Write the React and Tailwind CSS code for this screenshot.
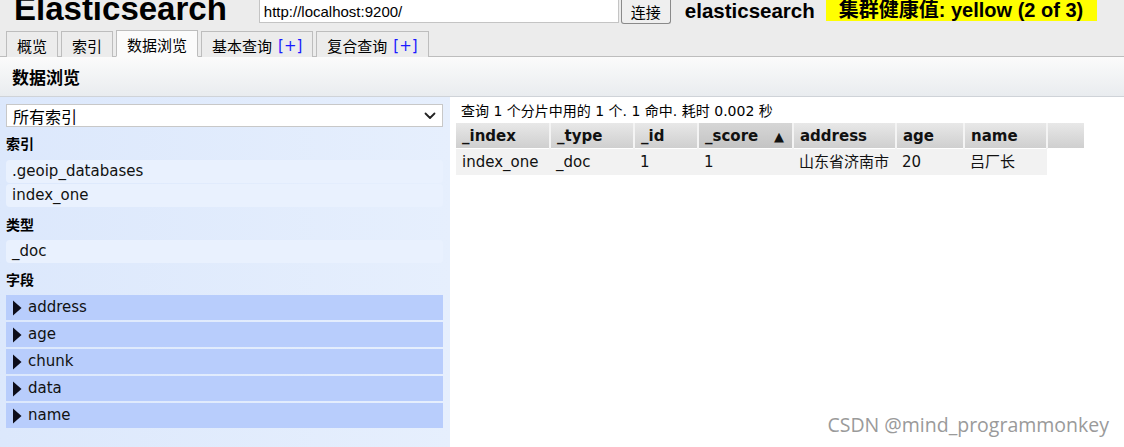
import React from "react";

const tabs = [
  { label: "概览" },
  { label: "索引" },
  { label: "数据浏览", active: true },
  { label: "基本查询", plus: true },
  { label: "复合查询", plus: true },
];

const indices = [".geoip_databases", "index_one"];
const fields = ["address", "age", "chunk", "data", "name"];

const columns = [
  { key: "_index", w: "w-[94px]" },
  { key: "_type", w: "w-[84px]" },
  { key: "_id", w: "w-[64px]" },
  { key: "_score", w: "w-[95px]", sorted: true },
  { key: "address", w: "w-[103px]" },
  { key: "age", w: "w-[68px]" },
  { key: "name", w: "w-[83px]" },
];

const row = ["index_one", "_doc", "1", "1", "山东省济南市", "20", "吕厂长"];

const SideLabel = ({ children, h }) => (
  <div className={`${h} flex items-center pt-[2px] text-[14px] font-bold text-black`}>
    {children}
  </div>
);

const SideItem = ({ children }) => (
  <div className="h-[23px] mb-px flex items-center pl-[6px] rounded-[4px] bg-[#e9f1fe] text-[15px] text-[#111]">
    {children}
  </div>
);

const App = () => {
  return (
    <div className="relative w-[1124px] h-[447px] overflow-hidden bg-white font-['DejaVu_Sans','Noto_Sans_CJK_SC',sans-serif]">
      {/* top bar */}
      <div className="bg-[#ececec] h-[57px] border-b border-[#bdbdbd] flex flex-col">
        <div className="h-[31px] flex items-start">
          <h1 className="ml-[14px] -mt-[10px] text-[33px] leading-[38px] font-bold text-black font-['Liberation_Sans',sans-serif]">
            Elasticsearch
          </h1>
          <input
            readOnly
            value="http://localhost:9200/"
            className="ml-[32px] w-[360px] h-[23px] bg-white border border-[#c4c4c4] border-t-0 px-[4px] text-[15px] text-black outline-none font-['Liberation_Sans',sans-serif]"
          />
          <button className="ml-[2px] w-[50px] h-[24px] border border-[#8a8a8a] rounded-b-[3px] border-t-0 bg-[#efefef] text-[15px] leading-none text-black font-['Noto_Sans_CJK_SC',sans-serif]">
            连接
          </button>
          <span className="ml-[14px] text-[20.5px] leading-[22px] font-bold text-black font-['Liberation_Sans',sans-serif]">
            elasticsearch
          </span>
          <span className="ml-[11px] w-[271px] h-[21px] bg-[#ffff00] pl-[13px] text-[20px] leading-[21px] font-bold text-black font-['Liberation_Sans','Noto_Sans_CJK_SC',sans-serif]">
            集群健康值: yellow (2 of 3)
          </span>
        </div>
        <div className="flex items-end gap-[3px] pl-[6px] h-[26px] -mb-px">
          {tabs.map((t) => (
            <div
              key={t.label}
              className={`h-[26px] px-[10px] pt-[4px] flex items-center border border-[#bdbdbd] text-[15px] text-black font-['Noto_Sans_CJK_SC',sans-serif] ${
                t.active
                  ? "bg-[#fbfbfb] border-b-[#fbfbfb] h-[27px]"
                  : "bg-[#ececec] border-b-0"
              }`}
            >
              {t.label}
              {t.plus && (
                <span className="ml-[6px] text-[#1a1aff] font-['DejaVu_Sans',sans-serif]">
                  [+]
                </span>
              )}
            </div>
          ))}
        </div>
      </div>

      {/* section header */}
      <div className="h-[40px] bg-gradient-to-b from-[#fbfbfb] to-[#e9ecef] border-b border-[#cfd3d8] flex items-center pl-[12px]">
        <span className="text-[17px] font-bold text-black font-['Noto_Sans_CJK_SC',sans-serif]">
          数据浏览
        </span>
      </div>

      <div className="flex h-[350px]">
        {/* sidebar */}
        <div className="w-[450px] bg-gradient-to-r from-[#dce8fc] to-[#e6effd] pl-[6px] pr-[7px] pt-[7px]">
          <div className="h-[23px] bg-white border border-[#c8c8c8] flex items-center justify-between pl-[6px] pr-[6px]">
            <span className="text-[16px] text-black font-['Noto_Sans_CJK_SC',sans-serif]">
              所有索引
            </span>
            <svg width="12" height="8" viewBox="0 0 12 8" fill="none">
              <path
                d="M1.5 1.5L6 6L10.5 1.5"
                stroke="#222"
                strokeWidth="1.8"
                strokeLinecap="round"
                strokeLinejoin="round"
              />
            </svg>
          </div>
          <SideLabel h="h-[33px]">索引</SideLabel>
          {indices.map((i) => (
            <SideItem key={i}>{i}</SideItem>
          ))}
          <SideLabel h="h-[32px]">类型</SideLabel>
          <SideItem>_doc</SideItem>
          <SideLabel h="h-[31px]">字段</SideLabel>
          {fields.map((f) => (
            <div
              key={f}
              className="h-[25px] mb-[2px] bg-[#b8cdfc] flex items-center pl-[6px] text-[15px] text-[#111]"
            >
              <svg width="10" height="16" viewBox="0 0 10 16" className="mr-[6px]">
                <path d="M1 0.5L9.5 8L1 15.5Z" fill="#0d0d1a" />
              </svg>
              {f}
            </div>
          ))}
        </div>

        {/* results */}
        <div className="flex-1 pl-[6px]">
          <div className="h-[26px] pt-[2px] flex items-center pl-[5px] text-[14px] text-black">
            查询 1 个分片中用的 1 个. 1 命中. 耗时 0.002 秒
          </div>
          <table className="border-collapse">
            <thead>
              <tr className="h-[25px]">
                {columns.map((c) => (
                  <th
                    key={c.key}
                    className={`${c.w} p-0 pl-[6px] pr-[8px] pt-[2px] text-left text-[15px] font-bold text-[#111] border-r-2 border-[#f4f4f4] bg-gradient-to-b ${
                      c.sorted
                        ? "from-[#d6d6d6] to-[#c4c4c4]"
                        : "from-[#e8e8e8] to-[#cfcfcf]"
                    }`}
                  >
                    <div className="flex items-center justify-between">
                      <span>{c.key}</span>
                      {c.sorted && <span className="text-[13px]">▲</span>}
                    </div>
                  </th>
                ))}
                <th className="w-[37px] p-0 bg-gradient-to-b from-[#e8e8e8] to-[#cfcfcf]" />
              </tr>
            </thead>
            <tbody>
              <tr className="h-[27px]">
                {row.map((v, i) => (
                  <td
                    key={i}
                    className="p-0 pl-[6px] bg-[#f2f2f2] text-[15px] text-[#111] border-t border-white"
                  >
                    {v}
                  </td>
                ))}
                <td className="p-0" />
              </tr>
            </tbody>
          </table>
        </div>
      </div>

      {/* watermark */}
      <div className="absolute right-[15px] bottom-[8px] text-[19.5px] text-[#9a9a9a] font-['Open_Sans',sans-serif] [text-shadow:1px_1px_1px_rgba(255,255,255,0.9)]">
        CSDN @mind_programmonkey
      </div>
    </div>
  );
};

export default App;
